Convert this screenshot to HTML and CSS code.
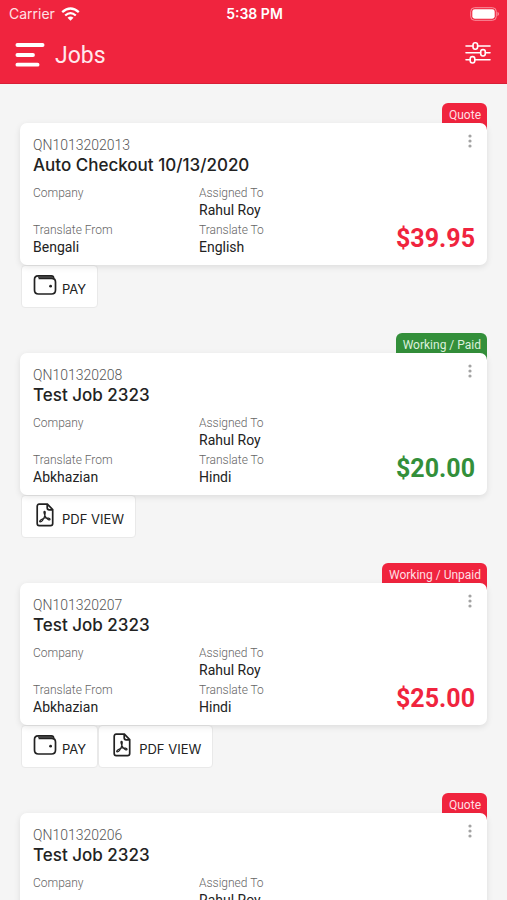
FILE: index.html
```html
<!DOCTYPE html>
<html lang="en">
<head>
<meta charset="utf-8">
<meta name="viewport" content="width=device-width, initial-scale=1">
<title>Jobs</title>
<link rel="stylesheet" href="styles.css">
</head>
<body>
<svg class="sprite" aria-hidden="true">
  <symbol id="dots" viewBox="0 0 4 14"><circle cx="2" cy="2" r="1.6"/><circle cx="2" cy="7" r="1.6"/><circle cx="2" cy="12" r="1.6"/></symbol>
  <symbol id="wallet" viewBox="0 0 24 22"><path d="M5 1.8h13.5q2 0 2.2 2.4M5 1.8Q1.5 2 1.5 5.4V16q0 4 4 4h13q4 0 4-4V8q0-3.6-4-3.6H5.6"/><path class="thin" d="M5 3.1h14"/><circle class="dot" cx="17.6" cy="12.2" r="1.4"/></symbol>
  <symbol id="pdf" viewBox="0 0 18 24"><path d="M3.2 1.2h8.2l5.3 5.4v13.8q0 2.2-2.2 2.2H3.2q-2 0-2-2.2V3.4q0-2.2 2-2.2zM11.2 1.4v3.4q0 2 2 2h3.3"/><path class="thin" d="M8.3 8.3c1.4-.2 1 2.6.3 4.8-.9 2.6-2.9 5.9-4.4 5.8-1.9-.3 1.8-3.5 4.7-3.9 2.5-.3 5.4.1 5.2 1.4-.4 1.4-3.3-.4-4.7-2.8-.9-1.6-2-5.1-1.1-5.3z"/></symbol>
</svg>
<header class="top">
  <div class="status">
    <span class="carrier">Carrier
      <svg width="19" height="14" viewBox="0 0 19 14" fill="none" stroke="#fff" stroke-width="2.3" aria-hidden="true"><path d="M1.2 5.2q8.3-7.4 16.6 0M4.2 8.5q5.3-4.7 10.6 0"/><path d="M9.5 13.8L6.5 10.8q3-2.4 6 0z" fill="#fff" stroke="none"/></svg>
    </span>
    <span class="time">5:38 PM</span>
    <svg class="battery" width="30" height="14" viewBox="0 0 30 14" aria-hidden="true"><rect x=".7" y=".7" width="25.6" height="12.6" rx="3.8" fill="none" stroke="#f9929f" stroke-width="1"/><rect x="2.3" y="2.3" width="22.4" height="9.4" rx="2.4" fill="#fff"/><path d="M27.5 4.8q3 2.2 0 4.4z" fill="#f9929f"/></svg>
  </div>
  <div class="bar">
    <button class="icon-btn" type="button" aria-label="Menu"><svg width="30" height="26" viewBox="0 0 30 26" stroke="#fff" stroke-width="3.8" stroke-linecap="round"><path d="M2.4 3h25.2M2.4 13h15.6M2.4 22.7h20.2"/></svg></button>
    <h1>Jobs</h1>
    <button class="icon-btn filter" type="button" aria-label="Filter"><svg width="26" height="24" viewBox="0 0 26 24" fill="none" stroke="#fff" stroke-width="1.6" stroke-linecap="round"><path d="M1 5h6.8M13 5h12M1 11.8h14.5M20.5 11.8H25M1 18.8h4M10 18.8h15"/><rect x="8" y="1.8" width="4.6" height="6.4" rx="2.2"/><rect x="15.7" y="8.6" width="4.6" height="6.4" rx="2.2"/><rect x="5.2" y="15.6" width="4.6" height="6.4" rx="2.2"/></svg></button>
  </div>
</header>
<main class="jobs">
  <article class="job">
    <span class="badge">Quote</span>
    <section class="card">
      <button class="more" type="button" aria-label="More options"><svg width="4" height="14"><use href="#dots"/></svg></button>
      <p class="number">QN1013202013</p>
      <h2>Auto Checkout 10/13/2020</h2>
      <div class="details">
        <dl><dt>Company</dt><dd></dd><dt>Translate From</dt><dd>Bengali</dd></dl>
        <dl><dt>Assigned To</dt><dd>Rahul Roy</dd><dt>Translate To</dt><dd>English</dd></dl>
        <strong class="price">$39.95</strong>
      </div>
    </section>
    <div class="actions"><button type="button"><svg width="24" height="22"><use href="#wallet"/></svg><span>PAY</span></button></div>
  </article>
  <article class="job paid">
    <span class="badge">Working / Paid</span>
    <section class="card">
      <button class="more" type="button" aria-label="More options"><svg width="4" height="14"><use href="#dots"/></svg></button>
      <p class="number">QN101320208</p>
      <h2>Test Job 2323</h2>
      <div class="details">
        <dl><dt>Company</dt><dd></dd><dt>Translate From</dt><dd>Abkhazian</dd></dl>
        <dl><dt>Assigned To</dt><dd>Rahul Roy</dd><dt>Translate To</dt><dd>Hindi</dd></dl>
        <strong class="price">$20.00</strong>
      </div>
    </section>
    <div class="actions"><button class="pdf" type="button"><svg width="18" height="24"><use href="#pdf"/></svg><span>PDF VIEW</span></button></div>
  </article>
  <article class="job">
    <span class="badge">Working / Unpaid</span>
    <section class="card">
      <button class="more" type="button" aria-label="More options"><svg width="4" height="14"><use href="#dots"/></svg></button>
      <p class="number">QN101320207</p>
      <h2>Test Job 2323</h2>
      <div class="details">
        <dl><dt>Company</dt><dd></dd><dt>Translate From</dt><dd>Abkhazian</dd></dl>
        <dl><dt>Assigned To</dt><dd>Rahul Roy</dd><dt>Translate To</dt><dd>Hindi</dd></dl>
        <strong class="price">$25.00</strong>
      </div>
    </section>
    <div class="actions"><button type="button"><svg width="24" height="22"><use href="#wallet"/></svg><span>PAY</span></button><button class="pdf" type="button"><svg width="18" height="24"><use href="#pdf"/></svg><span>PDF VIEW</span></button></div>
  </article>
  <article class="job">
    <span class="badge">Quote</span>
    <section class="card">
      <button class="more" type="button" aria-label="More options"><svg width="4" height="14"><use href="#dots"/></svg></button>
      <p class="number">QN101320206</p>
      <h2>Test Job 2323</h2>
      <div class="details">
        <dl><dt>Company</dt><dd></dd></dl>
        <dl><dt>Assigned To</dt><dd>Rahul Roy</dd></dl>
      </div>
    </section>
  </article>
</main>
</body>
</html>
```
FILE: styles.css
```css
* { box-sizing: border-box; margin: 0; padding: 0; }
body {
  display: flex;
  flex-direction: column;
  height: 100vh;
  background: #f5f5f5;
  color: #222;
  font-family: Roboto, "Liberation Sans", sans-serif;
}
button { font: inherit; color: inherit; background: none; border: 0; cursor: pointer; }
svg { display: block; flex: none; }
.sprite { position: absolute; width: 0; height: 0; }

.top { flex: none; background: #f0243e; color: #fff; border-bottom: 1px solid #d81f37; }
.status {
  display: grid;
  grid-template-columns: 1fr auto 1fr;
  align-items: center;
  height: 27px;
  padding: 0 7px 0 9px;
  font-family: Inter, sans-serif;
  font-size: 14px;
}
.carrier { display: flex; align-items: center; gap: 6px; color: #ffe1e5; }
.time { font-weight: 600; }
.battery { justify-self: end; }
.bar { display: flex; align-items: center; gap: 10px; height: 56px; padding: 0 16px 0 15px; }
.bar h1 { font-size: 23px; font-weight: 400; color: #ffe9ec; }
.filter { margin-left: auto; padding-bottom: 4px; }

.jobs {
  flex: 1;
  min-height: 0;
  overflow-y: auto;
  scrollbar-width: none;
  padding: 19px 20px 0;
}
.job { display: flex; flex-direction: column; margin-bottom: 25px; }
.badge {
  align-self: flex-end;
  height: 30px;
  margin-bottom: -10px;
  padding: 4px 6px 0 7px;
  border-radius: 6px 6px 0 0;
  background: #f0243e;
  color: #ffdfe3;
  font-size: 12px;
  line-height: 16px;
}
.card {
  position: relative;
  padding: 12px 12px 8px 13px;
  border-radius: 7px;
  background: #fff;
  box-shadow: 0 2px 6px rgba(0, 0, 0, .1);
}
.more { position: absolute; top: 6px; right: 10px; padding: 5px; fill: #a3a3a3; }
.number { font-size: 14px; line-height: 20px; font-weight: 300; color: #555; }
.card h2 { font-family: Inter, sans-serif; font-size: 17px; line-height: 20px; font-weight: 500; }
.details {
  display: grid;
  grid-template-columns: 166px 1fr auto;
  align-items: end;
  padding-top: 8px;
}
dt { font-size: 12px; line-height: 20px; font-weight: 300; color: #666; }
dd { height: 17px; font-size: 14px; line-height: 14px; }
.price { font-size: 25px; line-height: 36px; color: #f0243e; }
.paid .badge { background: #338f3a; color: #dcefdd; }
.paid .price { color: #338f3a; }

.actions { display: flex; height: 43px; padding: 0 1px; }
.actions button {
  display: flex;
  align-items: center;
  gap: 5px;
  padding: 0 11px;
  border: 1px solid #e9e9e9;
  border-radius: 4px;
  background: #fff;
  font-family: Inter, sans-serif;
  font-size: 13px;
}
.actions .pdf { gap: 8px; padding-left: 14px; }
.actions svg { margin-bottom: 3px; fill: none; stroke: #222; stroke-width: 1.7; }
.actions span { padding-top: 4px; }
.thin { stroke-width: 1.2; }
.dot { fill: #222; stroke: none; }
```
